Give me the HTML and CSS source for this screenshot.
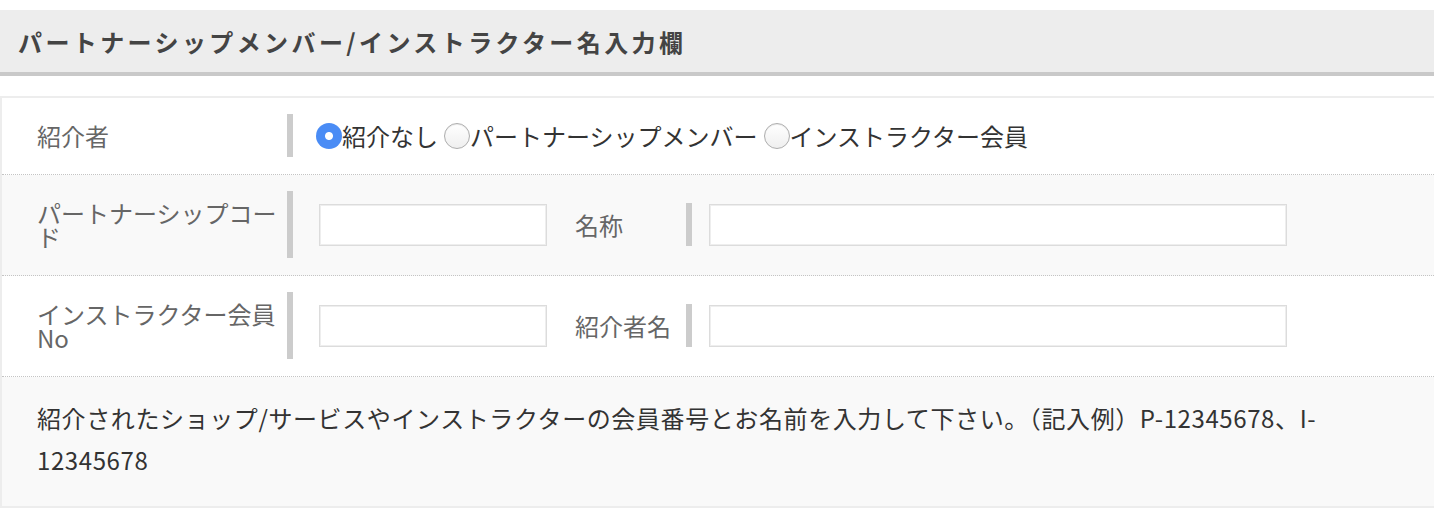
FILE: index.html
```html
<!DOCTYPE html>
<html lang="ja">
<head>
    <meta charset="UTF-8">
    <meta name="viewport" content="width=device-width, initial-scale=1.0">
    <title>パートナーシップメンバー/インストラクター名入力欄</title>
    <link rel="stylesheet" href="styles.css">
</head>
<body>
    <div class="section-head">
        <h3>パートナーシップメンバー/インストラクター名入力欄</h3>
    </div>
    <div class="form-box">
        <div class="form-row">
            <div class="row-label">紹介者</div>
            <div class="radio-group">
                <label class="radio-item"><input type="radio" name="introducer" value="none" checked>紹介なし</label>
                <label class="radio-item"><input type="radio" name="introducer" value="partner">パートナーシップメンバー</label>
                <label class="radio-item"><input type="radio" name="introducer" value="instructor">インストラクター会員</label>
            </div>
        </div>
        <div class="form-row alt">
            <div class="row-label">パートナーシップコード</div>
            <input type="text" class="code-input" id="partnerCode">
            <div class="row-label sub-label">名称</div>
            <input type="text" class="name-input" id="partnerName">
        </div>
        <div class="form-row">
            <div class="row-label">インストラクター会員No</div>
            <input type="text" class="code-input" id="instructorNo">
            <div class="row-label sub-label">紹介者名</div>
            <input type="text" class="name-input" id="introducerName">
        </div>
        <div class="form-note alt">
            紹介されたショップ/サービスやインストラクターの会員番号とお名前を入力して下さい。（記入例）P-12345678、I-<wbr>12345678
        </div>
    </div>
</body>
</html>
```

FILE: styles.css
```css
body {
    margin: 0;
    font-family: "Noto Sans CJK JP", "Noto Sans", sans-serif;
    color: #333;
    background: #fff;
}
.section-head {
    margin-top: 10px;
    height: 62px;
    background: #ededed;
    border-bottom: 4px solid #c9c9c9;
    display: flex;
    align-items: center;
    padding-left: 18px;
}
.section-head h3 {
    margin: 0;
    font-size: 24px;
    font-weight: bold;
    letter-spacing: 3.4px;
    color: #444;
}
.form-box {
    margin-top: 20px;
    border: 2px solid #ededed;
    border-right: none;
}
.form-row {
    display: flex;
    align-items: center;
    padding: 16px 0 17px;
    border-bottom: 1px dotted #c4c4c4;
    background: #fff;
}
.alt {
    background: #f9f9f9;
}
.row-label {
    width: 245px;
    padding: 10px 5px 9px 35px;
    border-right: 6px solid #ccc;
    font-size: 24px;
    line-height: 24px;
    color: #666;
    flex-shrink: 0;
}
.sub-label {
    width: 96px;
    padding: 10px 15px 9px 0;
    margin-left: 28px;
}
.radio-group {
    display: flex;
    align-items: center;
    gap: 6px;
    margin-left: 23px;
}
.radio-item {
    display: flex;
    align-items: center;
    font-size: 24px;
    line-height: 30px;
    color: #333;
}
.radio-item input {
    appearance: none;
    -webkit-appearance: none;
    width: 26px;
    height: 26px;
    margin: 0;
    border-radius: 50%;
    border: 1px solid #adadad;
    background: linear-gradient(#fff, #efefef);
    box-shadow: inset 0 1px 1px rgba(0, 0, 0, 0.08);
    box-sizing: border-box;
}
.radio-item input:checked {
    border: none;
    background: radial-gradient(circle, #fff 0, #fff 3.5px, #4a8cf5 4.5px);
    box-shadow: none;
}
input[type=text] {
    height: 42px;
    box-sizing: border-box;
    border: 1px solid #dcdcdc;
    box-shadow: inset 0 0 0 1px #eee;
    background: #fff;
    padding: 4px 8px;
    font-size: 18px;
    font-family: inherit;
}
.code-input {
    width: 228px;
    margin-left: 26px;
}
.name-input {
    width: 578px;
    margin-left: 17px;
}
.form-note {
    padding: 20px 60px 25px 35px;
    font-size: 24px;
    line-height: 42px;
    letter-spacing: 0.6px;
    color: #333;
}
```
